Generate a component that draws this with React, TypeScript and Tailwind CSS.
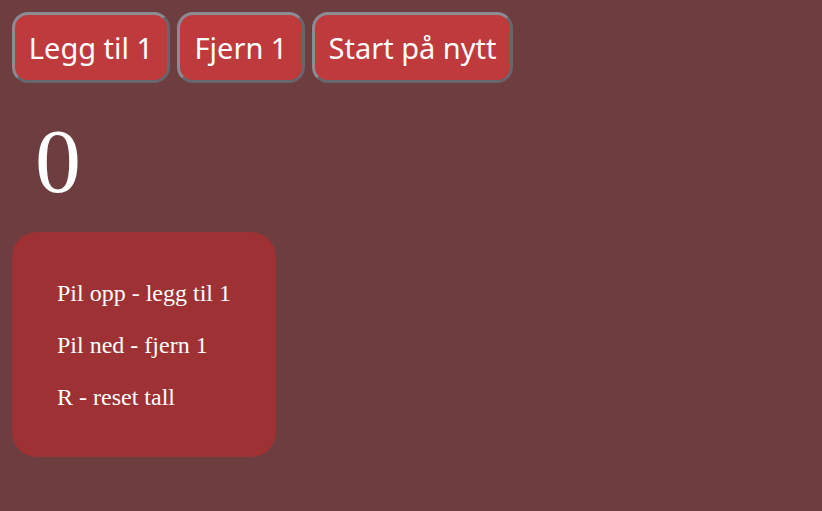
export default function App() {
  const btn =
    "h-[71px] px-0 bg-[#bf3a3c] text-white text-[29px] whitespace-nowrap rounded-[16px] border-[3px] border-t-[#8b8b93] border-l-[#8b8b93] border-b-[#66666c] border-r-[#66666c] leading-none";
  return (
    <div className="w-[822px] h-[511px] bg-[#6e3d3f] overflow-hidden">
      <div className="flex gap-[7px] pl-[12px] pt-[12px]" style={{ fontFamily: '"Noto Sans", sans-serif' }}>
        <button className={btn + " w-[158px]"}>Legg til 1</button>
        <button className={btn + " w-[128px]"}>Fjern 1</button>
        <button className={btn + " w-[201px]"}>Start på nytt</button>
      </div>
      <div
        className="pl-[35px] pt-[32px] text-white text-[92px] leading-none h-[149px]"
        style={{ fontFamily: '"Liberation Serif", serif' }}
      >
        0
      </div>
      <div
        className="ml-[12px] w-[264px] h-[225px] rounded-[25px] bg-[#9e3133] pl-[45px] pt-[47px] text-white text-[24px] flex flex-col gap-[24px]"
        style={{ fontFamily: '"Liberation Serif", serif' }}
      >
        <p className="leading-[28px]">Pil opp - legg til 1</p>
        <p className="leading-[28px]">Pil ned - fjern 1</p>
        <p className="leading-[28px]">R - reset tall</p>
      </div>
    </div>
  );
}
